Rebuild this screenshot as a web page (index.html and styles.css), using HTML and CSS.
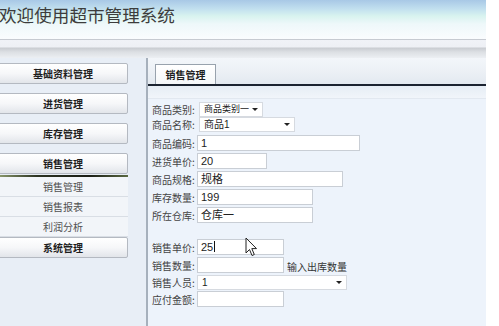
FILE: index.html
```html
<!DOCTYPE html>
<html lang="zh-CN">
<head>
  <meta charset="UTF-8">
  <title>欢迎使用超市管理系统</title>
  <link rel="stylesheet" href="styles.css">
</head>
<body>
  <div class="app">
    <div class="header">
      <h1 class="title">欢迎使用超市管理系统</h1>
    </div>
    <div class="toolbar"></div>

    <div class="content">
      <div class="sidebar">
        <div class="menu-btn">基础资料管理</div>
        <div class="menu-btn">进货管理</div>
        <div class="menu-btn">库存管理</div>
        <div class="menu-btn active">销售管理</div>
        <div class="menu-line"></div>
        <div class="submenu">
          <div class="sub-item">销售管理</div>
          <div class="sub-item">销售报表</div>
          <div class="sub-item">利润分析</div>
        </div>
        <div class="menu-btn">系统管理</div>
      </div>

      <div class="main">
        <div class="tabbar">
          <div class="tab">销售管理</div>
        </div>
        <div class="tab-shade"></div>

        <div class="form">
          <div class="group">
            <div class="row sel r1">
              <span class="label">商品类别:</span>
              <div class="select w-cat">商品类别一<span class="arrow"></span></div>
            </div>
            <div class="row sel r2">
              <span class="label">商品名称:</span>
              <div class="select w-name">商品1<span class="arrow"></span></div>
            </div>
            <div class="row">
              <span class="label">商品编码:</span>
              <div class="input w-code">1</div>
            </div>
            <div class="row">
              <span class="label">进货单价:</span>
              <div class="input w-buy">20</div>
            </div>
            <div class="row">
              <span class="label">商品规格:</span>
              <div class="input w-spec">规格</div>
            </div>
            <div class="row">
              <span class="label">库存数量:</span>
              <div class="input w-stock">199</div>
            </div>
            <div class="row">
              <span class="label">所在仓库:</span>
              <div class="input w-stock">仓库一</div>
            </div>
          </div>

          <div class="group second">
            <div class="row">
              <span class="label">销售单价:</span>
              <div class="input w-short">25<span class="text-cursor"></span></div>
            </div>
            <div class="row">
              <span class="label">销售数量:</span>
              <div class="input w-short"></div>
              <span class="hint">输入出库数量</span>
            </div>
            <div class="row sel">
              <span class="label">销售人员:</span>
              <div class="select w-staff">1<span class="arrow"></span></div>
            </div>
            <div class="row">
              <span class="label">应付金额:</span>
              <div class="input w-short"></div>
            </div>
          </div>
        </div>
      </div>
    </div>

    <!-- mouse pointer from the capture -->
    <svg class="pointer" width="13" height="20" viewBox="0 0 13 20">
      <path d="M1 1 L1 16 L4.5 12.5 L7 18.5 L9.3 17.5 L6.8 11.6 L11.5 11.6 Z" fill="#fff" stroke="#222" stroke-width="1" stroke-linejoin="round"/>
    </svg>
  </div>
</body>
</html>
```

FILE: styles.css
```css
body {
  margin: 0;
  background-color: #fff;
  font-family: "Noto Sans CJK SC", "Liberation Sans", sans-serif;
  color: #333;
}
.app {
  position: relative;
  width: 486px;
  height: 326px;
  overflow: hidden;
  background-color: #e8eef6;
}

/* header */
.header {
  height: 39px;
  border-bottom: 1px solid #c6cad1;
  background: linear-gradient(to bottom, #a8c8e6 0, #c2e0ef 9px, #d8f3ef 16px, #eef8fa 24px, #fafcfe 39px);
}
.title {
  margin: 0 0 0 -1px;
  padding-top: 4px;
  font-size: 17.6px;
  line-height: 22px;
  font-weight: normal;
  color: #3c3c3c;
}
.toolbar {
  height: 18px;
  background: linear-gradient(to bottom, #f0f2f7 0, #eef0f5 7px, #c9ccd1 8px, #dcdfe3 12px, #eceff3 18px);
}

.content {
  display: flex;
}

/* sidebar */
.sidebar {
  width: 128px;
  padding-top: 5px;
}
.menu-btn {
  height: 19px;
  margin: 0 0 9px -2px;
  border: 1px solid #b4b9c1;
  border-radius: 2px;
  background: linear-gradient(to bottom, #ffffff 0, #f6f7f9 50%, #e2e5ea 100%);
  font-size: 10px;
  font-weight: bold;
  line-height: 19px;
  text-align: center;
  color: #1e1e1e;
}
.menu-btn.active {
  margin-bottom: 0;
}
.menu-line {
  height: 2px;
  margin: 1px 0 0 -2px;
  background: linear-gradient(90deg, #8c9a6c 0, #2c3322 30%, #1a1d15 70%, #5b6941 100%);
}
.submenu {
  background-color: #f2f5f9;
  margin-left: -2px;
}
.sub-item {
  height: 19px;
  border-bottom: 1px solid #d9dee5;
  font-size: 10px;
  line-height: 19px;
  text-align: center;
  color: #505050;
}

/* main panel */
.main {
  width: 338px;
  margin-left: 18px;
  border-left: 2px solid #a6b0bc;
  background-color: #edf3fb;
  height: 268px;
}
.tabbar {
  height: 20px;
  padding: 6px 0 0 7px;
  border-bottom: 2px solid #1b2330;
  background: linear-gradient(to bottom, #f3f6fa 0, #edf1f6 12px, #e3e9f0 26px);
  display: flex;
  align-items: flex-end;
}
.tab {
  width: 59px;
  height: 19px;
  border: 1px solid #98a2ad;
  border-bottom: none;
  background: linear-gradient(to bottom, #ffffff 0, #f5f7f9 100%);
  font-size: 10px;
  font-weight: bold;
  line-height: 20px;
  text-align: center;
  color: #1e1e1e;
}
.tab-shade {
  height: 12px;
  border-bottom: 1px solid #e2e8f0;
  background: linear-gradient(to bottom, #e6edf5 0, #f1f5fa 100%);
}

/* form */
.form {
  padding: 3px 0 0 4px;
}
.group.second {
  margin-top: 14px;
}
.row {
  display: flex;
  align-items: center;
  height: 18px;
}
.row.sel {
  height: 16px;
}
.row.r1 {
  height: 15px;
}
.row.r2 {
  height: 17px;
  align-items: flex-start;
}
.label {
  width: 45px;
  font-size: 10px;
  color: #444;
  white-space: nowrap;
}
.input, .select {
  position: relative;
  box-sizing: border-box;
  height: 16px;
  padding-left: 3px;
  border: 1px solid #c9ced5;
  background-color: #fff;
  font-family: "Liberation Sans", "Noto Sans CJK SC", sans-serif;
  font-size: 11px;
  line-height: 14px;
  color: #222;
  white-space: nowrap;
}
.select {
  height: 15px;
  border-color: #d6dae0;
  line-height: 13px;
  padding-left: 4px;
  font-size: 10px;
}
.arrow {
  position: absolute;
  right: 4px;
  top: 5px;
  border-left: 3px solid transparent;
  border-right: 3px solid transparent;
  border-top: 3px solid #222;
}
.text-cursor {
  display: inline-block;
  width: 1px;
  height: 11px;
  margin-left: 1px;
  vertical-align: -1px;
  background-color: #111;
}
.hint {
  margin-left: 3px;
  margin-top: 2px;
  font-size: 10px;
  color: #333;
}
.w-cat { width: 64px; margin-left: 2px; font-size: 9px; }
.w-name { width: 96px; margin-left: 2px; }
.w-code { width: 163px; }
.w-buy { width: 70px; }
.w-spec { width: 146px; }
.w-stock { width: 116px; }
.w-short { width: 87px; }
.w-staff { width: 150px; }

.pointer {
  position: absolute;
  left: 245px;
  top: 237px;
}
```
